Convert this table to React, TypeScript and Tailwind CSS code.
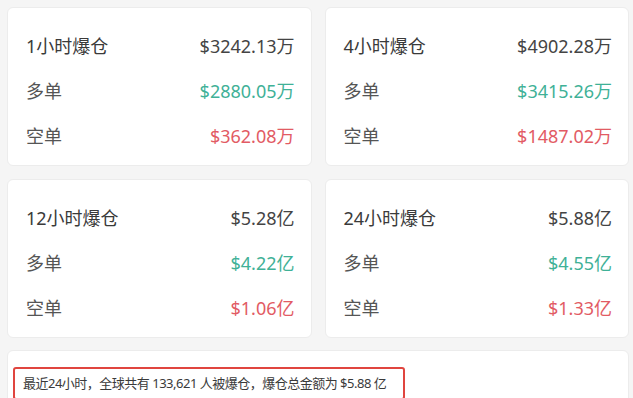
import React from 'react';

interface StatCardProps {
  title: string;
  total: string;
  long: string;
  short: string;
}

const font = { fontFamily: '"Noto Sans", "Noto Sans CJK SC", sans-serif' };

const StatCard: React.FC<StatCardProps> = ({ title, total, long, short }) => {
  const rows = [
    { label: title, value: total, labelCls: 'text-[#3a3a3a]', valueCls: 'text-[#444444]' },
    { label: '多单', value: long, labelCls: 'text-[#555555]', valueCls: 'text-[#3fb197]' },
    { label: '空单', value: short, labelCls: 'text-[#555555]', valueCls: 'text-[#e25b64]' },
  ];

  return (
    <div className="h-[159px] bg-white border border-[#ececec] rounded-md pl-[18px] pr-[16px] pt-[15px] pb-[8px]">
      {rows.map((row) => (
        <div key={row.label} className="h-[45px] flex items-center justify-between text-[18px] leading-none">
          <span className={row.labelCls}>{row.label}</span>
          <span className={row.valueCls}>{row.value}</span>
        </div>
      ))}
    </div>
  );
};

const App: React.FC = () => {
  const cards = [
    { title: '1小时爆仓', total: '$3242.13万', long: '$2880.05万', short: '$362.08万' },
    { title: '4小时爆仓', total: '$4902.28万', long: '$3415.26万', short: '$1487.02万' },
    { title: '12小时爆仓', total: '$5.28亿', long: '$4.22亿', short: '$1.06亿' },
    { title: '24小时爆仓', total: '$5.88亿', long: '$4.55亿', short: '$1.33亿' },
  ];

  return (
    <div className="w-[633px] h-[398px] overflow-hidden bg-[#f5f5f5] pl-[7px] pr-[4px] pt-[7px]" style={font}>
      <div className="grid grid-cols-2 gap-x-[13px] gap-y-[13px]">
        {cards.map((c) => (
          <StatCard key={c.title} {...c} />
        ))}
      </div>
      <div className="mt-[12px] h-[80px] bg-white border border-[#ececec] rounded-md pl-[5px] pt-[16px]">
        <div className="w-[392px] h-[33px] border-2 border-[#e0453f] rounded-[3px] flex items-center pl-[8px] text-[13px] text-[#3a3a3a] tracking-[-0.5px]">
          最近24小时，全球共有 133,621 人被爆仓，爆仓总金额为 $5.88 亿
        </div>
      </div>
    </div>
  );
};

export default App;
